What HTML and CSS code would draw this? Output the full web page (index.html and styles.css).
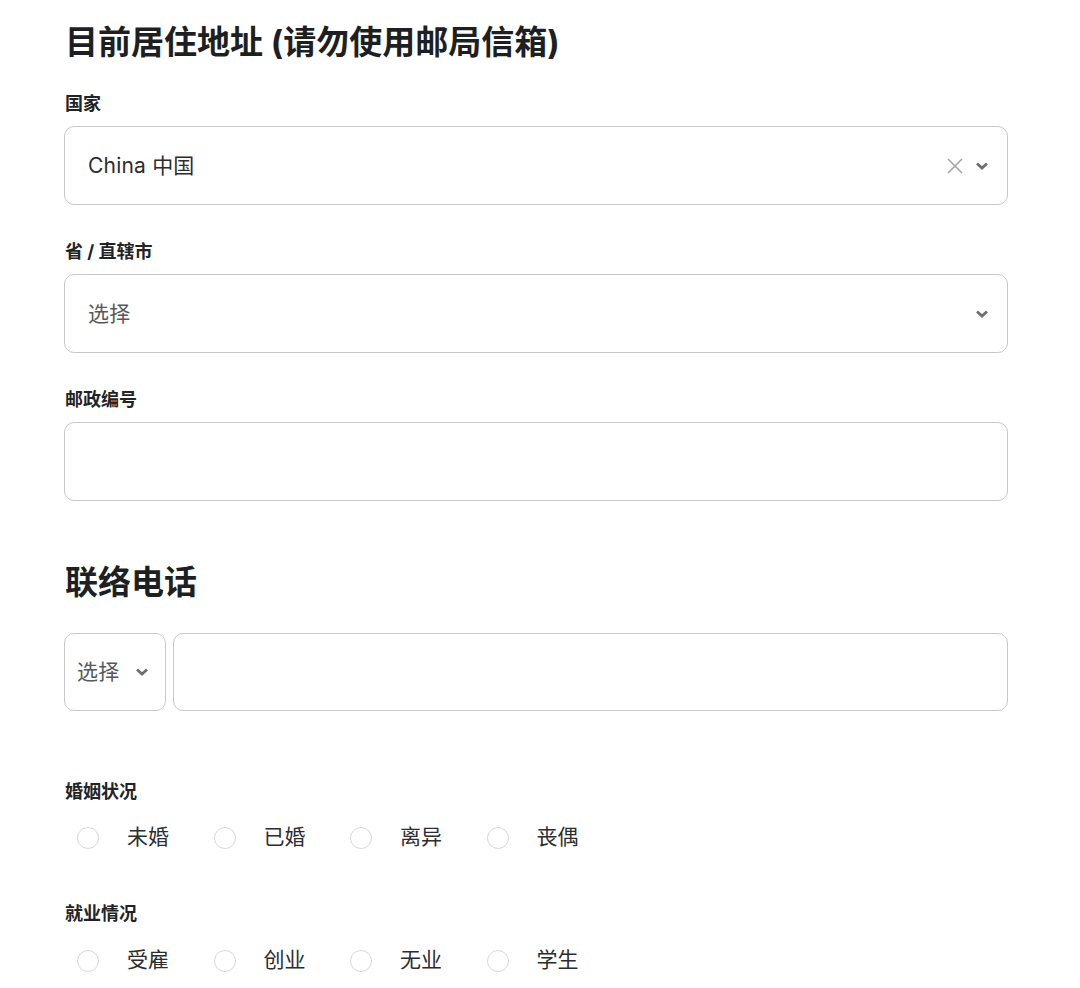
FILE: index.html
```html
<!DOCTYPE html>
<html lang="zh-CN">
<head>
<meta charset="utf-8">
<title>联系信息</title>
<link rel="stylesheet" href="styles.css">
</head>
<body>
<main class="form">
  <section class="section">
    <h2 class="section-title">目前居住地址 (请勿使用邮局信箱)</h2>

    <div class="field">
      <label class="field-label">国家</label>
      <div class="control select">
        <span class="value">China 中国</span>
        <span class="icons">
          <svg class="clear" width="18" height="18" viewBox="0 0 18 18"><path d="M2 2 L16 16 M16 2 L2 16" stroke="#a3a3a3" stroke-width="1.6" fill="none"/></svg>
          <svg class="chev" width="14" height="10" viewBox="0 0 14 10"><path d="M2 2.5 L7 7 L12 2.5" stroke="#6f6f6f" stroke-width="2.8" fill="none"/></svg>
        </span>
      </div>
    </div>

    <div class="field">
      <label class="field-label">省 / 直辖市</label>
      <div class="control select">
        <span class="value placeholder">选择</span>
        <span class="icons">
          <svg class="chev" width="14" height="10" viewBox="0 0 14 10"><path d="M2 2.5 L7 7 L12 2.5" stroke="#6f6f6f" stroke-width="2.8" fill="none"/></svg>
        </span>
      </div>
    </div>

    <div class="field">
      <label class="field-label">邮政编号</label>
      <div class="control"></div>
    </div>
  </section>

  <section class="section phone-section">
    <h2 class="section-title">联络电话</h2>
    <div class="phone-row">
      <div class="control select code">
        <span class="value placeholder">选择</span>
        <svg class="chev" width="14" height="10" viewBox="0 0 14 10"><path d="M2 2.5 L7 7 L12 2.5" stroke="#6f6f6f" stroke-width="2.8" fill="none"/></svg>
      </div>
      <div class="control number"></div>
    </div>
  </section>

  <section class="choice-group marital">
    <div class="field-label">婚姻状况</div>
    <div class="radios">
      <label class="radio"><span class="dot"></span><span class="radio-text">未婚</span></label>
      <label class="radio"><span class="dot"></span><span class="radio-text">已婚</span></label>
      <label class="radio"><span class="dot"></span><span class="radio-text">离异</span></label>
      <label class="radio"><span class="dot"></span><span class="radio-text">丧偶</span></label>
    </div>
  </section>

  <section class="choice-group employment">
    <div class="field-label">就业情况</div>
    <div class="radios">
      <label class="radio"><span class="dot"></span><span class="radio-text">受雇</span></label>
      <label class="radio"><span class="dot"></span><span class="radio-text">创业</span></label>
      <label class="radio"><span class="dot"></span><span class="radio-text">无业</span></label>
      <label class="radio"><span class="dot"></span><span class="radio-text">学生</span></label>
    </div>
  </section>
</main>
</body>
</html>
```

FILE: styles.css
```css
* { box-sizing: border-box; }

html, body {
  margin: 0;
  background: #ffffff;
}

body {
  font-family: "Inter", "Noto Sans CJK SC", sans-serif;
  color: #222326;
}

.form {
  width: 944px;
  margin-left: 64px;
  padding-top: 20px;
}

.section-title {
  margin: 0 0 29px 1px;
  font-size: 33px;
  line-height: 44px;
  font-weight: 700;
  color: #1d1f22;
}

.field { margin-bottom: 36px; }
.field:last-child { margin-bottom: 0; }

.field-label {
  display: block;
  margin: 0 0 11px 1px;
  font-size: 18px;
  line-height: 22px;
  font-weight: 700;
  color: #222326;
}

.control {
  height: 79px;
  border: 1.5px solid #c8c8c8;
  border-radius: 10px;
  background: #fff;
  display: flex;
  align-items: center;
}

.select {
  padding: 0 18px 0 23px;
  justify-content: space-between;
}

.value {
  font-size: 21px;
  line-height: 28px;
  color: #2b2d30;
  letter-spacing: 0.2px;
}

.placeholder { color: #55585c; }

.icons {
  display: flex;
  align-items: center;
  gap: 11px;
}

.chev { display: block; }
.clear { display: block; }

.phone-section { margin-top: 59px; }

.phone-row {
  display: flex;
  gap: 7px;
}

.code {
  width: 102px;
  flex: none;
  height: 78px;
  padding: 0 16px 0 12px;
}

.number {
  flex: 1;
  height: 78px;
}

.choice-group .field-label { margin-bottom: 15px; }
.employment .field-label { margin-bottom: 16px; }

.marital { margin-top: 70px; }
.employment { margin-top: 45px; }

.radios {
  display: flex;
  padding-left: 13px;
  height: 40px;
  align-items: center;
}

.radio {
  width: 136.5px;
  display: flex;
  align-items: center;
  gap: 28px;
  font-size: 21px;
  color: #2b2d30;
}

.radio-text {
  line-height: 28px;
  margin-bottom: 2px;
}

.dot {
  width: 22px;
  height: 22px;
  border-radius: 50%;
  border: 1.5px solid #d8d8d8;
  background: #fff;
  flex: none;
}
```
